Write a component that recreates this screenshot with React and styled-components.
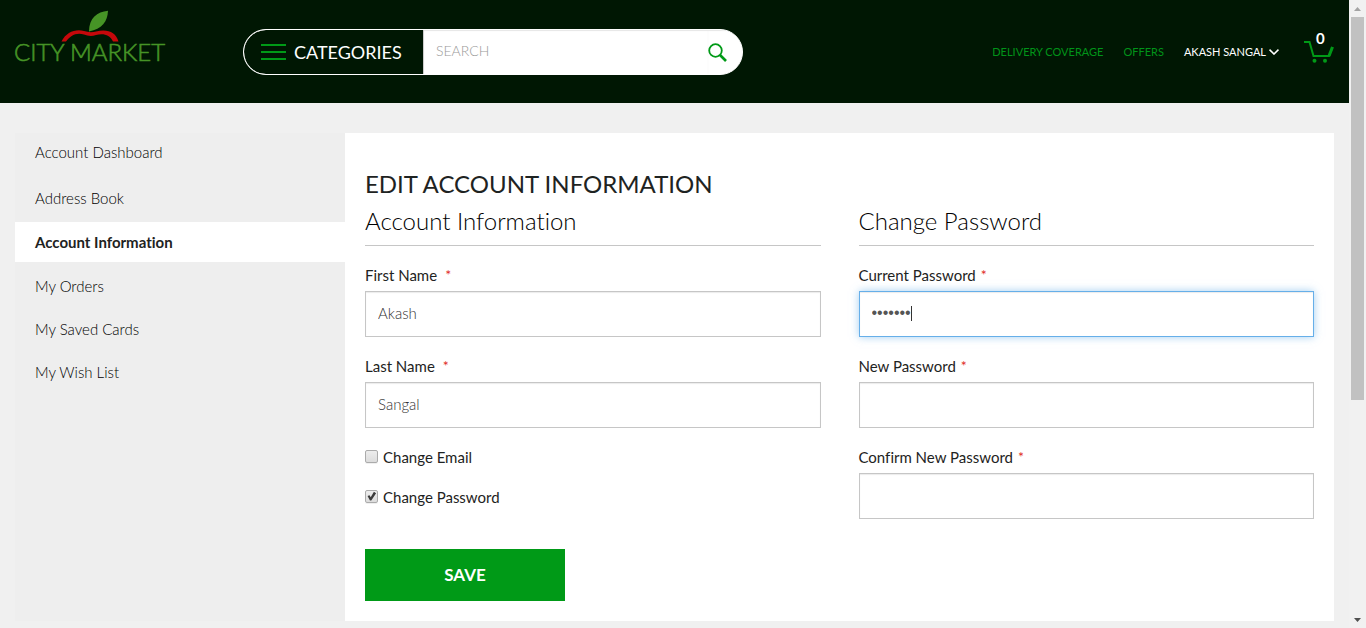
import React from "react";
import styled, { createGlobalStyle } from "styled-components";

const GlobalStyle = createGlobalStyle`
  *, *::before, *::after { box-sizing: border-box; }
  body {
    margin: 0;
    background: #f0f0f0;
    color: #1e2322;
    font-family: Lato, "Open Sans", sans-serif;
    font-size: 15px;
    line-height: 20px;
    font-variant-ligatures: none;
  }
  h1, h2, ul { margin: 0; padding: 0; font-weight: 400; }
  ul { list-style: none; }
  button, input { font: inherit; color: inherit; margin: 0; border-radius: 0; }
  a { color: inherit; text-decoration: none; }
`;

const Window = styled.div`
  display: flex;
  align-items: flex-start;
`;

const Page = styled.div`
  flex: 1;
  min-width: 0;
`;

const Header = styled.header`
  display: flex;
  align-items: flex-start;
  height: 103px;
  padding: 0 15px;
  background: #001703;
`;

const Logo = styled.a`
  width: 228px;
  padding-top: 10px;
  svg { display: block; overflow: visible; }
  text {
    font-family: Lato, sans-serif;
    font-size: 24px;
    font-weight: 300;
    fill: #469426;
    stroke: #469426;
    stroke-width: 0.6px;
  }
`;

const SearchBar = styled.form`
  display: flex;
  width: 500px;
  height: 46px;
  margin-top: 29px;
  border: 1px solid #ffffff;
  border-radius: 23px;
  overflow: hidden;
  background: #ffffff;
`;

const CategoriesButton = styled.button`
  display: flex;
  align-items: center;
  gap: 8px;
  width: 179px;
  padding: 0 0 0 17px;
  border: 0;
  border-radius: 22px 0 0 22px;
  background: #001703;
  color: #ffffff;
  font-size: 18px;
`;

const SearchInput = styled.input`
  flex: 1;
  min-width: 0;
  padding: 0 12px 2px;
  border: 0;
  border-left: 1px solid #cccccc;
  outline: 0;
  font-size: 14px;
  font-weight: 300;
  box-shadow: inset 0 1px 1px rgba(0, 0, 0, 0.1);
  &::placeholder { color: #999999; }
`;

const SearchButton = styled.button`
  display: flex;
  align-items: center;
  padding: 0 15px 0 0;
  border: 0;
  background: #ffffff;
  box-shadow: inset 0 1px 1px rgba(0, 0, 0, 0.1);
`;

const TopLinks = styled.nav`
  display: flex;
  align-items: center;
  gap: 20px;
  height: 46px;
  margin: 29px 0 0 auto;
  color: #009419;
  font-size: 11px;
`;

const UserButton = styled.button`
  display: flex;
  align-items: center;
  gap: 3px;
  padding: 0;
  border: 0;
  background: none;
  color: #ffffff;
`;

const CartLink = styled.a`
  position: relative;
  margin-left: 5px;
  svg { display: block; }
`;

const CartCount = styled.span`
  position: absolute;
  top: -13px;
  left: 12px;
  color: #ffffff;
  font-size: 15px;
  font-weight: 700;
`;

const Main = styled.main`
  display: flex;
  padding: 30px 15px 7px;
`;

const Sidebar = styled.nav`
  display: flex;
  flex-direction: column;
  gap: 5px;
  flex: 0 0 330px;
  background: #eeeeee;
`;

const MenuGroup = styled.ul`
  display: flex;
  flex-direction: column;
  gap: ${(p) => p.$gap}px;
`;

const MenuLink = styled.a`
  display: block;
  padding: 0 20px;
  line-height: ${(p) => (p.$active ? 40 : 38)}px;
  background: ${(p) => (p.$active ? "#ffffff" : "transparent")};
  color: ${(p) => (p.$active ? "#1e2322" : "#000000")};
  font-weight: ${(p) => (p.$active ? 700 : 300)};
`;

const Panel = styled.section`
  flex: 1;
  min-width: 0;
  padding: 34px 20px 20px;
  background: #ffffff;
`;

const PageTitle = styled.h1`
  font-size: 24px;
  line-height: 34px;
`;

const Columns = styled.div`
  display: grid;
  grid-template-columns: 1fr 1fr;
  gap: 38px;
`;

const FieldSet = styled.div`
  display: flex;
  flex-direction: column;
  gap: 19px;
`;

const SectionTitle = styled.h2`
  padding-bottom: 4px;
  border-bottom: 1px solid #c6c6c6;
  color: #000000;
  font-size: 24px;
  font-weight: 300;
  line-height: 40px;
`;

const Field = styled.div`
  display: flex;
  flex-direction: column;
  gap: 6px;
`;

const FieldLabel = styled.label`
  display: flex;
  gap: ${(p) => (p.$wide ? 8 : 5)}px;
`;

const Required = styled.span`
  color: #e02b27;
  font-size: 14px;
`;

const InputWrap = styled.div`
  position: relative;
`;

const TextInput = styled.input`
  display: block;
  width: 100%;
  height: 46px;
  padding: 0 12px 2px;
  border: 1px solid ${(p) => (p.$active ? "#66afe9" : "#c6c6c6")};
  outline: 0;
  background: #ffffff;
  color: ${(p) => (p.type === "password" ? "#555555" : "#333333")};
  font-family: ${(p) => (p.type === "password" ? '"Liberation Sans", sans-serif' : "inherit")};
  font-size: ${(p) => (p.type === "password" ? 16 : 15)}px;
  font-weight: ${(p) => (p.type === "password" ? 400 : 300)};
  box-shadow: inset 0 1px 1px rgba(0, 0, 0, 0.08)${(p) => (p.$active ? ", 0 0 8px rgba(102, 175, 233, 0.6)" : "")};
`;

const Caret = styled.span`
  position: absolute;
  top: 15px;
  left: 52px;
  width: 1px;
  height: 15px;
  background: #333333;
`;

const CheckRow = styled.label`
  display: flex;
  align-items: center;
  gap: 5px;
`;

const Checks = styled.div`
  display: flex;
  flex-direction: column;
  gap: 20px;
`;

const CheckBox = styled.input`
  appearance: none;
  width: 13px;
  height: 13px;
  margin-bottom: 2px;
  border: 1px solid #ababab;
  border-radius: 2px;
  background: linear-gradient(#ededed, #dcdcdc);
  box-shadow: 0 1px 0 rgba(0, 0, 0, 0.06);
  &:checked::before {
    content: "";
    display: block;
    width: 11px;
    height: 11px;
    background: #3c3c3c;
    clip-path: polygon(14% 50%, 32% 44%, 43% 62%, 72% 12%, 92% 24%, 48% 90%, 36% 90%);
  }
`;

const SaveButton = styled.button`
  width: 200px;
  height: 52px;
  margin-top: 30px;
  border: 0;
  background: #009a17;
  color: #ffffff;
  font-size: 17px;
  font-weight: 700;
`;

const ScrollTrack = styled.div`
  position: sticky;
  top: 0;
  display: flex;
  flex-direction: column;
  align-items: center;
  width: 17px;
  height: 100vh;
  background: #f1f1f1;
  svg { flex: none; display: block; }
`;

const ScrollThumb = styled.div`
  width: 13px;
  height: 61%;
  margin-bottom: auto;
  background: #c1c1c1;
`;

const LogoArt = () => (
  <svg width="148" height="54" viewBox="0 0 148 54" role="img" aria-label="City Market">
    <text x="-1" y="51">CITY</text>
    <text x="55" y="51">MARKET</text>
    <path d="M74 21.5C74 8 82 2 93 .8C92.500 12 87 19 74 21.500Z" fill="#469426" />
    <path
      d="M46.500 31.500C51 22 61 18.500 69 21Q75 23 81 21.500C92 18.500 101 22 103.500 31.500H98C95 24.500 88 23 81 25Q75 27 69 24.500C61 22 55 26 51 31.500Z"
      fill="#c5080b"
    />
  </svg>
);

const Arrow = ({ up }) => (
  <svg width="17" height="17" viewBox="0 0 17 17">
    <path d={up ? "M5 11H12L8.500 7Z" : "M5 7H12L8.500 11Z"} fill={up ? "#a3a3a3" : "#505050"} />
  </svg>
);

const TextField = ({ id, label, wide, active, caret, ...rest }) => (
  <Field>
    <FieldLabel htmlFor={id} $wide={wide}>
      {label}
      <Required>*</Required>
    </FieldLabel>
    <InputWrap>
      <TextInput id={id} $active={active} {...rest} />
      {caret && <Caret />}
    </InputWrap>
  </Field>
);

export default function App() {
  return (
    <>
      <GlobalStyle />
      <Window>
        <Page>
          <Header>
            <Logo href="#"><LogoArt /></Logo>
            <SearchBar>
              <CategoriesButton type="button">
                <svg width="25" height="17" viewBox="0 0 25 17">
                  <path d="M0 1H25M0 8H25M0 15H25" stroke="#009a17" strokeWidth="2" />
                </svg>
                CATEGORIES
              </CategoriesButton>
              <SearchInput type="text" placeholder="SEARCH" aria-label="Search" />
              <SearchButton type="submit" aria-label="Search">
                <svg width="19" height="19" viewBox="0 0 19 19" fill="none" stroke="#009a17">
                  <circle cx="7.500" cy="7.500" r="6.300" strokeWidth="1.800" />
                  <path d="M12 12L18 18" strokeWidth="2.600" />
                </svg>
              </SearchButton>
            </SearchBar>
            <TopLinks>
              <a href="#">DELIVERY COVERAGE</a>
              <a href="#">OFFERS</a>
              <UserButton type="button">
                AKASH SANGAL
                <svg width="10" height="6" viewBox="0 0 10 6" fill="none" stroke="#fff" strokeWidth="1.600">
                  <path d="M.5.7L5 5L9.500.7" />
                </svg>
              </UserButton>
              <CartLink href="#" aria-label="Cart">
                <svg width="30" height="22" viewBox="0 0 30 22" fill="none" stroke="#009a17">
                  <path d="M0 1H5.500L9.500 15H25L28.500 6" strokeWidth="2" />
                  <path d="M25 15L28.500 6" strokeWidth="3" />
                  <circle cx="10.500" cy="19.800" r="2" fill="#009a17" stroke="none" />
                  <circle cx="21" cy="19.800" r="2" fill="#009a17" stroke="none" />
                </svg>
                <CartCount>0</CartCount>
              </CartLink>
            </TopLinks>
          </Header>
          <Main>
            <Sidebar>
              <MenuGroup $gap={8}>
                <li><MenuLink href="#">Account Dashboard</MenuLink></li>
                <li><MenuLink href="#">Address Book</MenuLink></li>
              </MenuGroup>
              <MenuLink href="#" $active>Account Information</MenuLink>
              <MenuGroup $gap={5}>
                <li><MenuLink href="#">My Orders</MenuLink></li>
                <li><MenuLink href="#">My Saved Cards</MenuLink></li>
                <li><MenuLink href="#">My Wish List</MenuLink></li>
              </MenuGroup>
            </Sidebar>
            <Panel>
              <PageTitle>EDIT ACCOUNT INFORMATION</PageTitle>
              <Columns>
                <FieldSet>
                  <SectionTitle>Account Information</SectionTitle>
                  <TextField id="first" label="First Name" wide type="text" defaultValue="Akash" />
                  <TextField id="last" label="Last Name" wide type="text" defaultValue="Sangal" />
                  <Checks>
                    <CheckRow><CheckBox type="checkbox" />Change Email</CheckRow>
                    <CheckRow><CheckBox type="checkbox" defaultChecked />Change Password</CheckRow>
                  </Checks>
                </FieldSet>
                <FieldSet>
                  <SectionTitle>Change Password</SectionTitle>
                  <TextField id="current" label="Current Password" type="password" defaultValue="market7" active caret />
                  <TextField id="new" label="New Password" type="password" />
                  <TextField id="confirm" label="Confirm New Password" type="password" />
                </FieldSet>
              </Columns>
              <SaveButton type="button">SAVE</SaveButton>
            </Panel>
          </Main>
        </Page>
        <ScrollTrack>
          <Arrow up />
          <ScrollThumb />
          <Arrow />
        </ScrollTrack>
      </Window>
    </>
  );
}
